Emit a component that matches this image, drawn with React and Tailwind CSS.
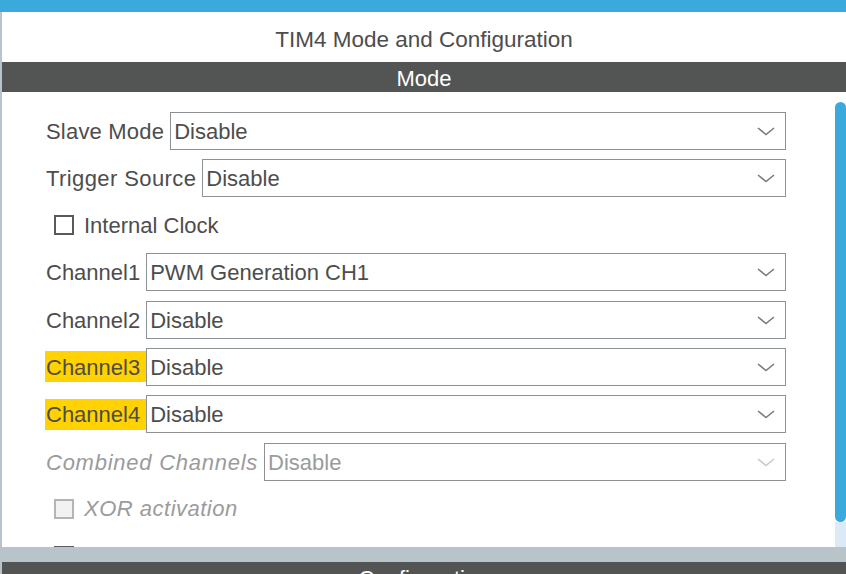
import React from "react";

function Chevron({ light }) {
  return (
    <svg width="18" height="9" viewBox="0 0 18 9" className="shrink-0">
      <path d="M1 1 L9 7.5 L17 1" fill="none" stroke={light ? "#c8c8c8" : "#7a7a7a"} strokeWidth="1.6" />
    </svg>
  );
}

function SelectRow({ label, value, highlight, disabled, track = "" }) {
  return (
    <div className="flex items-center h-[38px] shrink-0">
      <div
        className={
          "h-[31px] flex items-center pl-[1px] pr-[6px] pt-[1px] whitespace-nowrap " +
          track +
          " " +
          (highlight ? "bg-[#ffd200] text-[#4d4d4d]" : disabled ? "italic text-[#9b9b9b]" : "text-[#4d4d4d]")
        }
      >
        {label}
      </div>
      <div className="flex-1 h-[38px] border border-[#8c9196] flex items-center pl-[3px] pr-[10px] pt-[1px] bg-white">
        <span className={"flex-1 whitespace-nowrap " + (disabled ? "text-[#9b9b9b]" : "text-[#4d4d4d]")}>{value}</span>
        <Chevron light={disabled} />
      </div>
    </div>
  );
}

function CheckRow({ label, disabled }) {
  return (
    <div className="flex items-center h-[38px] shrink-0 pl-[9px]">
      <div
        className={
          "w-[20px] h-[20px] shrink-0 border-2 " +
          (disabled ? "border-[#b4b4b4] bg-[#f0f2f4]" : "border-[#5a5a5a] bg-white")
        }
      />
      <span
        className={
          "ml-[10px] whitespace-nowrap " +
          (disabled ? "italic text-[#9b9b9b] tracking-[0.5px]" : "text-[#4d4d4d]")
        }
      >
        {label}
      </span>
    </div>
  );
}

export default function App() {
  return (
    <div className="w-[846px] h-[574px] overflow-hidden flex flex-col bg-[#b9c3ca] font-['Liberation_Sans',Arial,sans-serif] text-[22px]">
      <div className="h-[12px] bg-[#3aaadc] shrink-0" />
      <div className="flex-1 flex flex-col ml-[2px] bg-white min-h-0">
        <div className="h-[50px] shrink-0 flex items-center justify-center pt-[5px] text-[#4d4d4d] text-[22.5px]">
          TIM4 Mode and Configuration
        </div>
        <div className="h-[30px] shrink-0 bg-[#535554] text-white flex items-center justify-center pt-[3px]">Mode</div>
        <div className="flex-1 flex min-h-0">
          <div className="flex-1 pl-[43px] pr-[49px] pt-[19.5px] flex flex-col gap-[9.3px] overflow-hidden">
            <SelectRow label="Slave Mode" value="Disable" track="tracking-[0.2px]" />
            <SelectRow label="Trigger Source" value="Disable" track="tracking-[0.4px]" />
            <CheckRow label="Internal Clock" />
            <SelectRow label="Channel1" value="PWM Generation CH1" />
            <SelectRow label="Channel2" value="Disable" />
            <SelectRow label="Channel3" value="Disable" highlight />
            <SelectRow label="Channel4" value="Disable" highlight />
            <SelectRow label="Combined Channels" value="Disable" disabled track="tracking-[0.75px]" />
            <CheckRow label="XOR activation" disabled />
            <CheckRow label="" />
          </div>
          <div className="w-[11px] shrink-0 flex flex-col">
            <div className="h-[10px] bg-white" />
            <div className="h-[420px] bg-[#3aaadc] rounded-[6px]" />
            <div className="flex-1 bg-[#dce9f6]" />
          </div>
        </div>
      </div>
      <div className="h-[15px] shrink-0" />
      <div className="h-[12px] shrink-0 ml-[2px] bg-[#535554] overflow-hidden">
        <div className="h-[30px] flex items-center justify-center pt-[3px] text-white">Configuration</div>
      </div>
    </div>
  );
}
